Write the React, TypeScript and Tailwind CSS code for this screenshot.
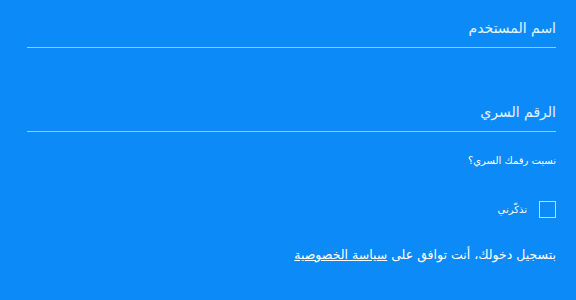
import React from "react";

export default function App() {
  return (
    <div
      dir="rtl"
      className="h-[300px] w-[576px] overflow-hidden bg-[#0b8af8] px-5 text-white"
      style={{ fontFamily: '"DejaVu Sans", sans-serif' }}
    >
      <div className="ml-[7px] pt-[18px]">
        <label className="block border-b-[1.5px] border-[#8ccdfc] pb-[8px] text-[14px] text-white/90">
          اسم المستخدم
        </label>
      </div>
      <div className="ml-[7px] pt-[54px]">
        <label className="block border-b-[1.5px] border-[#8ccdfc] pb-[8px] text-[14px] text-white/90">
          الرقم السري
        </label>
      </div>
      <p className="mt-[21px] text-[10px] text-white">نسيت رقمك السري؟</p>
      <div className="mt-[33px] flex items-center gap-3">
        <span className="h-[17px] w-[17px] border border-white/70" />
        <span className="text-[10px] text-white">تذكّرني</span>
      </div>
      <p className="mt-[28px] text-[12.5px] text-white">
        بتسجيل دخولك، أنت توافق على{" "}
        <a className="underline">سياسة الخصوصية</a>
      </p>
    </div>
  );
}
